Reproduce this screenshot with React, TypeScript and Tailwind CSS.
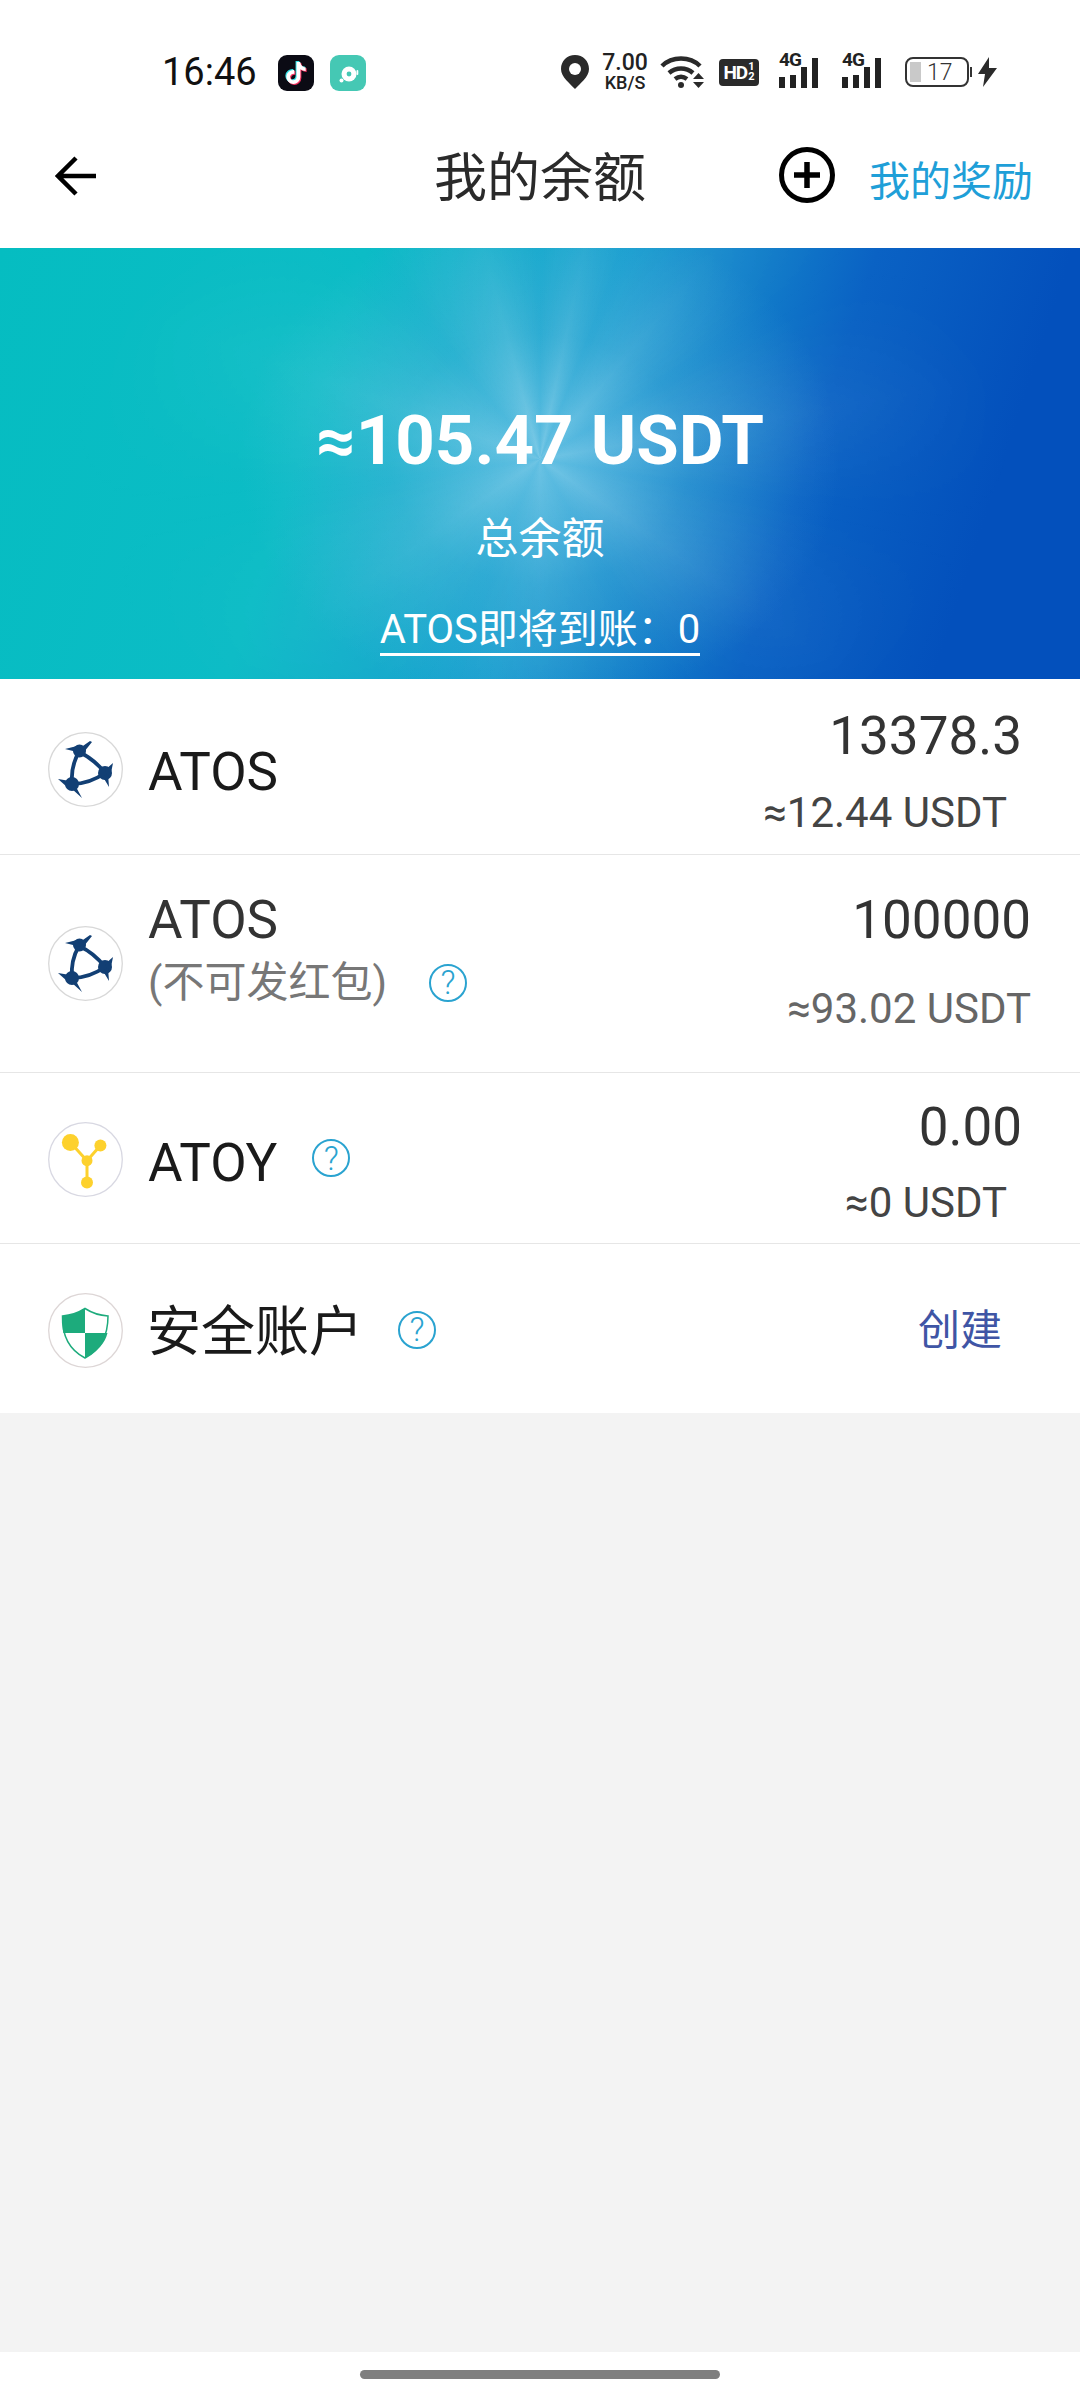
import { FaTiktok } from 'react-icons/fa6';

const font = "font-['Roboto','Noto_Sans_CJK_SC',sans-serif]";

function HelpIcon() {
  return (
    <span className="flex h-[38px] w-[38px] shrink-0 items-center justify-center rounded-full border-2 border-[#2aa3d0] text-[33px] font-light leading-none text-[#2aa3d0]">
      ?
    </span>
  );
}

function Signal() {
  return (
    <div className="relative flex h-[32px] w-[48px] items-end gap-[5px]">
      <span className="absolute left-0 top-[-6px] text-[19px] font-bold leading-none tracking-[-1px] text-[#222]">4G</span>
      <span className="h-[11px] w-[6px] bg-[#222]" />
      <span className="h-[13px] w-[6px] bg-[#222]" />
      <span className="h-[21px] w-[6px] bg-[#222]" />
      <span className="h-[30px] w-[6px] bg-[#222]" />
    </div>
  );
}

function StatusBar() {
  return (
    <div className="flex h-[96px] items-center justify-between pl-[162px] pr-[83px] pt-[48px]">
      <div className="flex items-center">
        <span className="w-[92px] text-[38px] leading-none text-[#111]">16:46</span>
        <div className="ml-[24px] mt-[1px] flex h-[36px] w-[36px] items-center justify-center rounded-[9px] bg-[#0b0b14]">
          <div className="relative h-[22px] w-[22px]">
            <FaTiktok className="absolute left-[-1px] top-[-1px] text-[22px] text-[#35e4ea]" />
            <FaTiktok className="absolute left-[1px] top-[1px] text-[22px] text-[#f5305f]" />
            <FaTiktok className="absolute left-0 top-0 text-[22px] text-white" />
          </div>
        </div>
        <div className="ml-[16px] mt-[1px] flex h-[36px] w-[36px] items-center justify-center rounded-[9px] bg-[#45c8b4]">
          <svg width="26" height="26" viewBox="0 0 26 26">
            <circle cx="14" cy="14" r="7.5" fill="#fff" />
            <circle cx="14" cy="14" r="2.4" fill="#45c8b4" />
            <circle cx="6.5" cy="20.5" r="2" fill="#fff" />
            <rect x="21.5" y="10" width="1.8" height="5" rx="0.9" fill="#fff" />
          </svg>
        </div>
      </div>
      <div className="flex items-center">
        <svg width="28" height="34" viewBox="0 0 28 34">
          <path d="M14 0C6 0 0 6 0 14c0 8 9 14.500 14 20 5-5.500 14-12 14-20C28 6 22 0 14 0z" fill="#2a2a2a" />
          <circle cx="14" cy="14" r="6" fill="#fff" />
        </svg>
        <div className="ml-[12px] flex w-[48px] flex-col items-center text-[#222]">
          <span className="text-[23px] font-medium leading-[22px]">7.00</span>
          <span className="text-[18px] font-medium leading-[18px]">KB/S</span>
        </div>
        <svg className="ml-[11px]" width="46" height="34" viewBox="0 0 46 34" fill="none" stroke="#2a2a2a" strokeWidth="4.500">
          <path d="M2 11C12 1 30 1 40 11" />
          <path d="M9 18c7-6 17-6 24 0" />
          <path d="M15 24c4-3 8-3 12 0" />
          <circle cx="21" cy="30" r="3" fill="#2a2a2a" stroke="none" />
          <path d="M33 24h11l-5.500-6z" fill="#2a2a2a" stroke="none" />
          <path d="M33 27h11l-5.500 6z" fill="#2a2a2a" stroke="none" />
        </svg>
        <div className="ml-[13px] flex h-[27px] w-[40px] items-center justify-center gap-[1px] rounded-[4px] bg-[#2a2a2a] text-white">
          <span className="text-[19px] font-bold leading-none tracking-[-1px]">HD</span>
          <span className="flex flex-col text-[11px] font-bold leading-[10px]">
            <span>1</span>
            <span>2</span>
          </span>
        </div>
        <div className="ml-[20px]">
          <Signal />
        </div>
        <div className="ml-[15px]">
          <Signal />
        </div>
        <div className="ml-[15px] flex items-center">
          <div className="flex h-[30px] w-[64px] items-center rounded-[8px] border-2 border-[#333] p-[3px]">
            <span className="h-full w-[11px] bg-[#c9c9c9]" />
            <span className="ml-[6px] text-[23px] font-light leading-none text-[#333]">17</span>
          </div>
          <span className="ml-[1px] h-[10px] w-[2px] bg-[#333]" />
        </div>
        <svg className="ml-[6px]" width="19" height="30" viewBox="0 0 19 30">
          <path d="M11 0 0 17h7l-2 13L19 11h-8z" fill="#2a2a2a" />
        </svg>
      </div>
    </div>
  );
}

function Header() {
  return (
    <div className="grid h-[152px] grid-cols-[1fr_auto_1fr] items-center bg-white">
      <div className="pl-[55px] pt-[8px]">
        <svg width="42" height="42" viewBox="0 0 42 42" fill="none" stroke="#000" strokeWidth="4.500">
          <path d="M41 21H4M21 3 3 21l18 18" />
        </svg>
      </div>
      <div className="pt-[14px] text-[53px] leading-none text-[#2a2a2a]">我的余额</div>
      <div className="flex items-center justify-end pr-[47px]">
        <svg className="mt-[6px]" width="56" height="56" viewBox="0 0 56 56" fill="none" stroke="#000">
          <circle cx="28" cy="28" r="25.500" strokeWidth="5" />
          <path d="M15 28h26M28 15v26" strokeWidth="5.500" />
        </svg>
        <span className="ml-[34px] mt-[20px] text-[41px] leading-none text-[#1f9fd8]">我的奖励</span>
      </div>
    </div>
  );
}

function Banner() {
  return (
    <div className="relative flex h-[431px] flex-col items-center bg-[image:radial-gradient(ellipse_300px_250px_at_50%_49%,rgba(130,205,235,0.7)_0%,rgba(100,190,225,0.3)_50%,rgba(100,190,225,0)_100%),linear-gradient(108deg,#05bdc1_0%,#0cbcc6_30%,#1b9ed0_52%,#0a62c4_72%,#0350bc_88%,#0350bc_100%)] pt-[158px] text-white">
      {/* rays fade out toward the edges */}
      <span className="absolute inset-0 bg-[image:conic-gradient(from_0deg_at_50%_49%,rgba(255,255,255,0)_0deg,rgba(255,255,255,0.14)_12deg,rgba(255,255,255,0)_22deg,rgba(255,255,255,0.1)_40deg,rgba(255,255,255,0)_58deg,rgba(255,255,255,0.1)_80deg,rgba(255,255,255,0)_100deg,rgba(255,255,255,0.1)_125deg,rgba(255,255,255,0)_150deg,rgba(255,255,255,0.07)_180deg,rgba(255,255,255,0)_205deg,rgba(255,255,255,0.09)_235deg,rgba(255,255,255,0)_262deg,rgba(255,255,255,0.1)_290deg,rgba(255,255,255,0)_320deg,rgba(255,255,255,0.16)_345deg,rgba(255,255,255,0)_360deg)] [mask-image:radial-gradient(ellipse_480px_330px_at_50%_49%,black_15%,transparent_100%)]" />
      <div className="relative text-[69px] font-bold leading-none">≈105.47 USDT</div>
      <div className="relative mt-[43px] text-[43px] leading-none">总余额</div>
      <div className="relative mt-[49px] border-b-[3px] border-white pb-[3px] text-[40px] leading-none">ATOS即将到账：0</div>
    </div>
  );
}

function AtosLogo() {
  return (
    <svg width="75" height="75" viewBox="0 0 75 75">
      <circle cx="37.500" cy="37.500" r="36.800" fill="#fff" stroke="#d8d8d8" strokeWidth="1.300" />
      <g fill="#123f74" stroke="#123f74">
        <path d="M31 20C25 30 23 40 24 52M31 20C42 25 50 32 57 41M24 52C36 52 47 48 57 41" fill="none" strokeWidth="3.800" />
        <circle cx="31.500" cy="19" r="6.500" stroke="none" />
        <circle cx="57" cy="41" r="7" stroke="none" />
        <circle cx="24" cy="52" r="7" stroke="none" />
        <path d="M17 17l12-3 4 7zM32 16l10-7 2 1-8 10zM57 38l8-7-2 10-4 2zM55 45l5-3 1 13zM10 47l12 2-3 6zM24 57l4-2 6 11z" stroke="none" />
      </g>
    </svg>
  );
}

function AtoyLogo() {
  return (
    <svg width="75" height="75" viewBox="0 0 75 75">
      <circle cx="37.500" cy="37.500" r="36.800" fill="#fff" stroke="#d8d8e2" strokeWidth="1.300" />
      <g fill="#fdd12d" stroke="#fdd12d">
        <path d="M22.400 20.400 39 38.700l13.400-15.300M39 38.700v21.700" fill="none" strokeWidth="3" />
        <circle cx="22.400" cy="20.400" r="8.500" stroke="none" />
        <circle cx="52.400" cy="23.400" r="6" stroke="none" />
        <circle cx="39" cy="38.700" r="5.500" stroke="none" />
        <circle cx="39" cy="60.400" r="6" stroke="none" />
      </g>
    </svg>
  );
}

function ShieldLogo() {
  return (
    <svg width="75" height="75" viewBox="0 0 75 75">
      <circle cx="37.500" cy="37.500" r="36.800" fill="#fff" stroke="#ddd6d6" strokeWidth="1.300" />
      <path d="M37 15.500C30 20 22 22.500 14.500 23c-.5 18 5 33 22.500 42 17.500-9 23-24 23-42-7.500-.5-16-3-23-7.500z" fill="#fff" stroke="#1dab7c" strokeWidth="1.500" />
      <path d="M37 15.500V40H15.300C14.500 35 14.300 29 14.500 23 22 22.500 30 20 37 15.500zM37 40h22.500C57 50 50 58.500 37 65z" fill="#1dab7c" />
    </svg>
  );
}

export default function App() {
  return (
    <div className={`${font} flex h-[2400px] w-[1080px] flex-col overflow-hidden bg-white`}>
      <StatusBar />
      <Header />
      <Banner />

      <div className="flex h-[176px] items-center border-b border-[#e6e6e6] pl-[48px] pr-[58px]">
        <span className="mt-[5px]">
          <AtosLogo />
        </span>
        <span className="ml-[25px] mt-[12px] text-[53px] leading-none text-[#1a1a1a]">ATOS</span>
        <div className="ml-auto mt-[10px] flex flex-col items-end">
          <span className="text-[53px] leading-none text-[#333]">13378.3</span>
          <span className="mr-[15px] mt-[29px] text-[42px] leading-none text-[#444]">≈12.44 USDT</span>
        </div>
      </div>

      <div className="flex h-[218px] items-center border-b border-[#e6e6e6] pl-[48px] pr-[49px]">
        <AtosLogo />
        <div className="ml-[25px] mb-[30px] flex flex-col">
          <span className="text-[53px] leading-none text-[#333]">ATOS</span>
          <div className="mt-[15px] flex items-center">
            <span className="text-[42px] leading-none text-[#777]">(不可发红包)</span>
            <span className="ml-[42px]">
              <HelpIcon />
            </span>
          </div>
        </div>
        <div className="ml-auto mb-[3px] flex flex-col items-end">
          <span className="text-[53px] leading-none text-[#333]">100000</span>
          <span className="mt-[41px] text-[42px] leading-none text-[#666]">≈93.02 USDT</span>
        </div>
      </div>

      <div className="flex h-[171px] items-center border-b border-[#e6e6e6] pl-[48px] pr-[58px]">
        <span className="mt-[2px]">
          <AtoyLogo />
        </span>
        <span className="ml-[25px] mt-[10px] text-[53px] leading-none text-[#1a1a1a]">ATOY</span>
        <span className="ml-[35px]">
          <HelpIcon />
        </span>
        <div className="ml-auto mt-[9px] flex flex-col items-end">
          <span className="text-[53px] leading-none text-[#333]">0.00</span>
          <span className="mr-[15px] mt-[28px] text-[42px] leading-none text-[#444]">≈0 USDT</span>
        </div>
      </div>

      <div className="flex h-[169px] items-center pl-[48px] pr-[78px]">
        <span className="mt-[3px]">
          <ShieldLogo />
        </span>
        <span className="ml-[24px] mt-[8px] text-[54px] leading-none text-[#1a1a1a]">安全账户</span>
        <span className="ml-[35px] mt-[2px]">
          <HelpIcon />
        </span>
        <span className="ml-auto mt-[5px] text-[42px] leading-none text-[#3f55a5]">创建</span>
      </div>

      <div className="flex-1 bg-[#f3f3f3]" />

      <div className="flex h-[48px] justify-center bg-white pt-[18px]">
        <span className="h-[9px] w-[360px] rounded-full bg-[#7f7f7f]" />
      </div>
    </div>
  );
}
